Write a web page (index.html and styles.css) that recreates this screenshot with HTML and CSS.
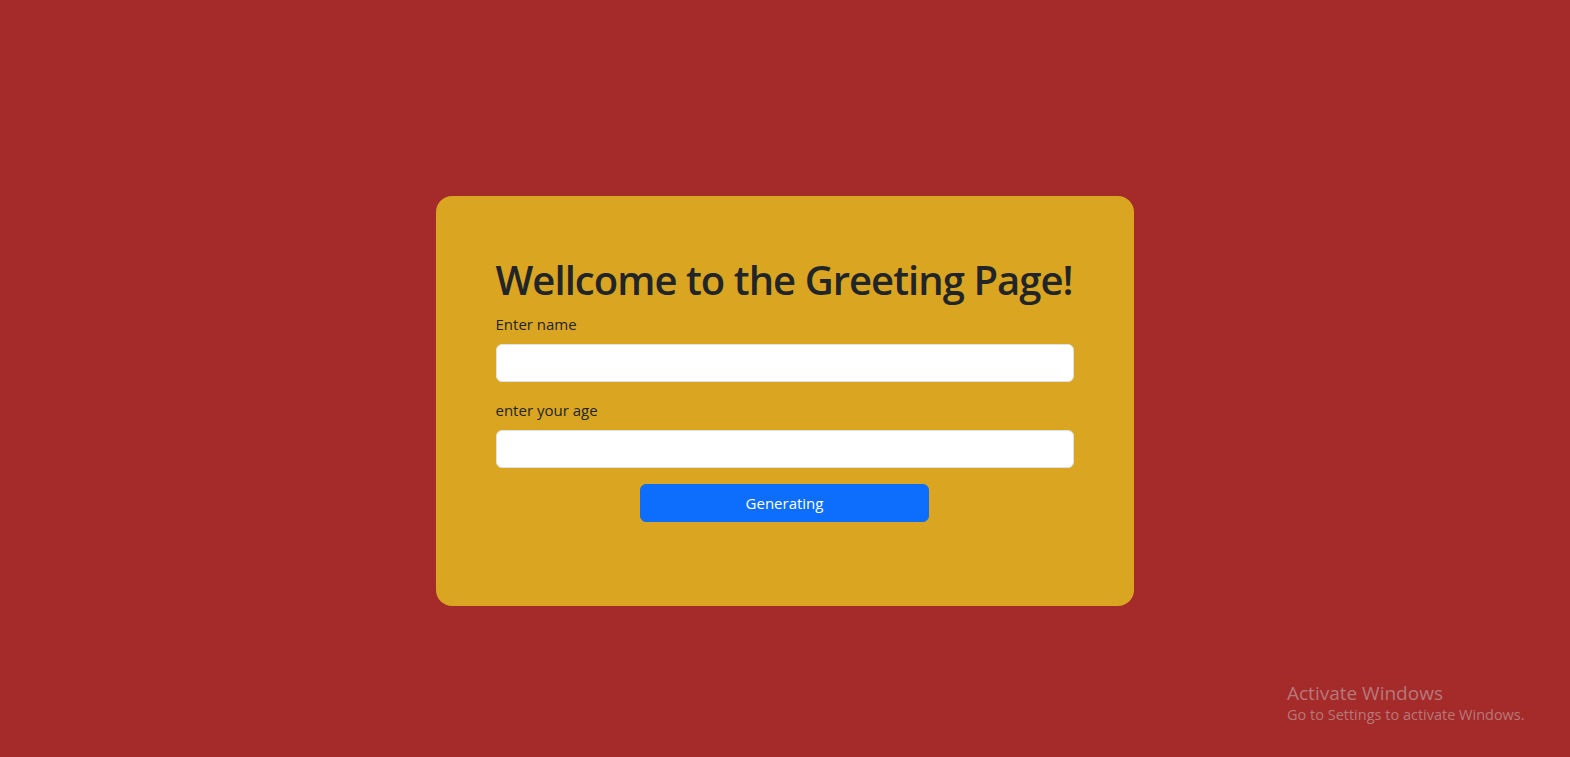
FILE: index.html
```html
<!DOCTYPE html>
<html lang="en">
<head>
<meta charset="utf-8">
<title>Greeting Page</title>
<link rel="stylesheet" href="styles.css">
</head>
<body>
<main class="page">
  <section class="card">
    <h1 class="title">Wellcome to the Greeting Page!</h1>
    <form class="form">
      <label class="label" for="name">Enter name</label>
      <input class="input" id="name" type="text">
      <label class="label" for="age">enter your age</label>
      <input class="input" id="age" type="text">
      <button class="btn" type="button">Generating</button>
    </form>
  </section>
</main>
<div class="watermark">
  <div class="wm-title">Activate Windows</div>
  <div class="wm-sub">Go to Settings to activate Windows.</div>
</div>
</body>
</html>
```
FILE: styles.css
```css
* { box-sizing: border-box; }
html, body { margin: 0; height: 100%; }
body {
  background: #a52a2a;
  font-family: "Open Sans", "Noto Sans", sans-serif;
  color: #212529;
  overflow: hidden;
}
.page {
  display: flex;
  justify-content: center;
  padding: 196px 1px 0 0;
}
.card {
  width: 698px;
  height: 410px;
  background: #daa520;
  border-radius: 16px;
  padding: 60px 60px 0;
}
.title {
  margin: 0 0 8px;
  font-size: 40px;
  line-height: 48px;
  font-weight: 600;
  letter-spacing: -0.95px;
  white-space: nowrap;
}
.form { display: flex; flex-direction: column; }
.label {
  font-size: 15px;
  line-height: 24px;
  margin-bottom: 8px;
}
.input {
  height: 38px;
  border: 1px solid #dee2e6;
  border-radius: 6px;
  background: #fff;
  margin-bottom: 16px;
  font: inherit;
}
.btn {
  align-self: center;
  width: 50%;
  height: 38px;
  margin-top: 0;
  background: #0d6efd;
  color: #fff;
  border: 1px solid #0d6efd;
  border-radius: 6px;
  font: inherit;
  font-size: 15px;
}
.watermark {
  position: absolute;
  left: 1287px;
  top: 681px;
  color: rgba(200,200,200,0.5);
}
.wm-title { font-size: 19px; line-height: 24px; }
.wm-sub { font-size: 14.5px; line-height: 20px; }
```
